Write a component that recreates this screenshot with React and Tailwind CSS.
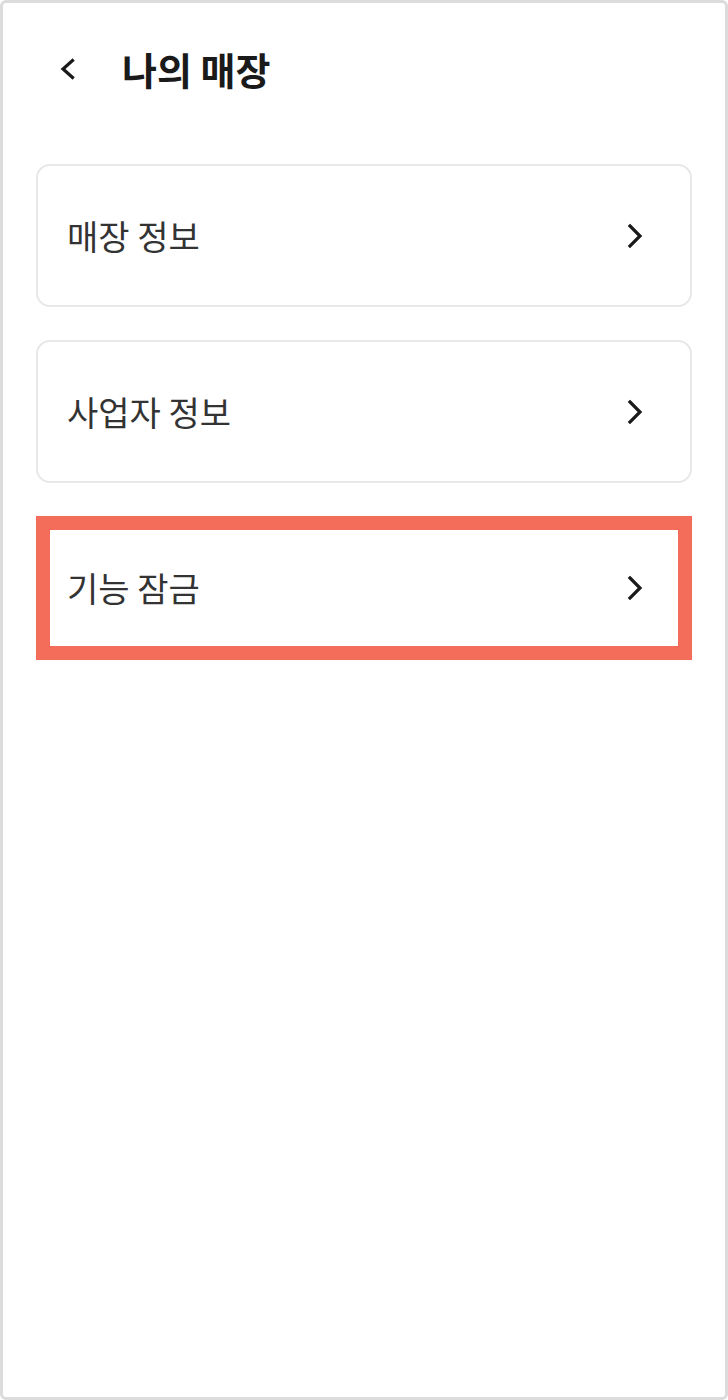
import { useState } from "react";

const font = { fontFamily: '"Noto Sans CJK KR", "Noto Sans", sans-serif' };

const menus = [
  { id: "store", label: "매장 정보" },
  { id: "biz", label: "사업자 정보" },
  { id: "lock", label: "기능 잠금", highlight: true },
];

function Chevron() {
  return (
    <svg width="16" height="26" viewBox="0 0 16 26" fill="none">
      <path
        d="M3 3 L13 13 L3 23"
        stroke="#1a1a1a"
        strokeWidth="3.2"
        strokeLinecap="square"
        strokeLinejoin="miter"
      />
    </svg>
  );
}

export default function App() {
  const [selected, setSelected] = useState(null);

  return (
    <div
      className="h-[1400px] w-[728px] bg-white border-[3px] border-[#dcdcdc] rounded-[6px] overflow-hidden"
      style={font}
    >
      {/* HEADER */}
      <div className="h-[132px] flex items-center">
        <button className="ml-[55px] w-[18px] h-[22px] flex items-center justify-center">
          <svg width="18" height="22" viewBox="0 0 18 22" fill="none">
            <path
              d="M14.5 2.5 L5 11 L14.5 19.5"
              stroke="#1a1a1a"
              strokeWidth="3.2"
              strokeLinecap="square"
            />
          </svg>
        </button>
        <h1 className="ml-[46px] text-[38px] font-bold text-[#1a1a1a] leading-none">
          나의 매장
        </h1>
      </div>

      {/* MENU LIST */}
      <div className="mt-[29px] px-[33px] flex flex-col gap-[33px]">
        {menus.map((m) =>
          m.highlight ? (
            <button
              key={m.id}
              onClick={() => setSelected(m.id)}
              className="h-[144px] border-[14px] border-[#f46d5b] bg-white flex items-center justify-between pl-[17px] pr-[35px]"
            >
              <span className="text-[34px] text-[#333333] leading-none">
                {m.label}
              </span>
              <Chevron />
            </button>
          ) : (
            <button
              key={m.id}
              onClick={() => setSelected(m.id)}
              className={`h-[143px] rounded-[14px] border-2 bg-white flex items-center justify-between pl-[29px] pr-[47px] ${
                selected === m.id ? "border-[#d0d0d0]" : "border-[#e8e8e8]"
              }`}
            >
              <span className="text-[34px] text-[#333333] leading-none">
                {m.label}
              </span>
              <Chevron />
            </button>
          )
        )}
      </div>
    </div>
  );
}
